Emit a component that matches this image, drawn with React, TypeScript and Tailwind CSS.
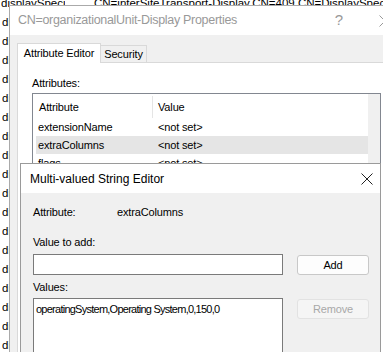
import React from "react";

const BG_ROWS = Array.from({ length: 19 }, (_, i) => i);

const ATTRS = [
  { name: "extensionName", value: "<not set>", selected: false },
  { name: "extraColumns", value: "<not set>", selected: true },
  { name: "flags", value: "<not set>", selected: false },
];

function CloseGlyph({ color }: { color: string }) {
  return (
    <svg width="12" height="12" viewBox="0 0 12 12" className="block">
      <path d="M0.5 0.5 L11.5 11.5 M11.5 0.5 L0.5 11.5" stroke={color} strokeWidth="1" fill="none" />
    </svg>
  );
}

export default function App() {
  return (
    <div className="relative w-[383px] h-[352px] overflow-hidden bg-white text-black [font-family:'Liberation_Sans',Arial,sans-serif]">
      {/* list behind the dialogs */}
      <div className="-mt-[6px] text-[11.5px]">
        {BG_ROWS.map((i) => (
          <div key={i} className="flex items-center h-[19px] whitespace-nowrap">
            {i === 0 ? (
              <>
                <span className="shrink-0 pl-[1px] w-[94px]">
                  <span className="block w-[64px] overflow-hidden">displaySpecifier</span>
                </span>
                <span className="shrink-0">CN=interSiteTransport-Display,CN=409,CN=DisplaySpecifiers</span>
              </>
            ) : (
              <span className="pl-[2px] block w-[9px] overflow-hidden">displaySpecifier</span>
            )}
          </div>
        ))}
      </div>

      {/* Properties dialog */}
      <div className="absolute left-[9px] top-[5px] w-[400px] h-[380px] border border-[#aaaaaa] bg-[#f0f0f0]">
        <div className="h-[29px] bg-white flex items-center text-[#999999]">
          <span className="pl-[8px] flex-1 text-[12.5px] tracking-[-0.3px]">CN=organizationalUnit-Display Properties</span>
          <span className="w-[46px] text-center text-[15px]">?</span>
          <span className="w-[46px] flex justify-center">
            <CloseGlyph color="#999999" />
          </span>
        </div>

        <div className="pt-[8px] pl-[7px] text-[11px] tracking-[-0.15px]">
          <div className="flex items-end h-[19px]">
            <div className="relative z-10 -mb-px h-[20px] w-[84px] bg-white border border-b-0 border-[#d9d9d9] flex items-center justify-center pb-[1px]">
              Attribute Editor
            </div>
            <div className="h-[17px] w-[46px] bg-[#f0f0f0] border border-l-0 border-b-0 border-[#d9d9d9] flex items-center justify-center">
              Security
            </div>
          </div>
          <div className="h-[320px] bg-white border border-[#d9d9d9] pl-[14px] pt-[13px]">
            <div className="h-[14px] leading-[14px]">Attributes:</div>
            <div className="mt-[3px] w-[349px] h-[200px] border border-[#828790] flex">
              <div className="flex-1 bg-white">
                <div className="flex h-[24px] items-center pt-[2px]">
                  <div className="w-[120px] h-full pl-[6px] flex items-center border-r border-[#e5e5e5]">Attribute</div>
                  <div className="pl-[5px]">Value</div>
                </div>
                {ATTRS.map((a) => (
                  <div
                    key={a.name}
                    className={`flex h-[18px] items-center ml-[3px] ${a.selected ? "bg-[#e5e5e5]" : ""}`}
                  >
                    <div className="w-[117px] pl-[2px]">{a.name}</div>
                    <div className="pl-[5px]">{a.value}</div>
                  </div>
                ))}
              </div>
              <div className="w-[12px] bg-[#f0f0f0]" />
            </div>
          </div>
        </div>
      </div>

      {/* Multi-valued String Editor */}
      <div className="absolute left-[20px] top-[163px] w-[361px] h-[220px] border border-[#9a9a9a] bg-[#f0f0f0]">
        <div className="h-[29px] bg-white flex items-center justify-between">
          <span className="pl-[9px] text-[12px]">Multi-valued String Editor</span>
          <span className="mr-[7px]">
            <CloseGlyph color="#222222" />
          </span>
        </div>
        <div className="pl-[12px] pt-[12px] text-[11px] tracking-[-0.15px]">
          <div className="flex h-[14px] items-center">
            <span className="w-[84px]">Attribute:</span>
            <span>extraColumns</span>
          </div>
          <div className="mt-[16px] h-[14px] leading-[14px]">Value to add:</div>
          <div className="mt-[5px] flex gap-[14px]">
            <div className="w-[250px] h-[21px] bg-white border border-[#7a7a7a]" />
            <button className="mt-[1px] w-[72px] h-[20px] rounded-[3px] bg-[#fdfdfd] border border-[#c8c8c8] flex items-center justify-center">
              Add
            </button>
          </div>
          <div className="mt-[5px] h-[14px] leading-[14px]">Values:</div>
          <div className="mt-[4px] flex gap-[14px]">
            <div className="w-[250px] h-[80px] bg-white border border-[#7a7a7a] pl-[2px] pt-[2px] tracking-[-0.75px]">
              operatingSystem,Operating System,0,150,0
            </div>
            <button
              disabled
              className="mt-[1px] w-[72px] h-[20px] rounded-[3px] bg-[#f5f5f5] border border-[#e2e2e2] text-[#a8a8a8] flex items-center justify-center"
            >
              Remove
            </button>
          </div>
        </div>
      </div>
    </div>
  );
}
